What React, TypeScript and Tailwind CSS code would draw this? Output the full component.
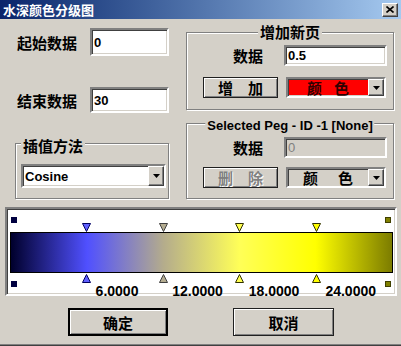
import React from "react";

const sunken =
  "border-2 border-t-[#808080] border-l-[#808080] border-b-white border-r-white shadow-[inset_1px_1px_0_#404040,inset_-1px_-1px_0_#d4d0c8]";
const raised =
  "border border-t-white border-l-white border-b-[#404040] border-r-[#404040] shadow-[inset_-1px_-1px_0_#808080]";
const btn =
  "border border-[#202020] shadow-[inset_1px_1px_0_#ffffff,inset_-1px_-1px_0_#808080]";
const etched = "border border-[#808080] shadow-[inset_1px_1px_0_#ffffff,1px_1px_0_#ffffff]";
const cjk = "font-['Noto_Sans_CJK_SC',sans-serif]";
const latin = "font-['Liberation_Sans','Noto_Sans_CJK_SC',sans-serif]";

function Arrow() {
  return (
    <div className={`w-[16px] h-full bg-[#d4d0c8] flex items-center justify-center ${raised}`}>
      <svg width="7" height="4" viewBox="0 0 7 4">
        <polygon points="0,0 7,0 3.5,4" fill="#000" />
      </svg>
    </div>
  );
}

function Marker({ x, up, fill, stroke }: { x: number; up: boolean; fill: string; stroke: string }) {
  const left = x - 4.5 - 7;
  return (
    <svg
      className="absolute"
      style={{ left, top: up ? 65 : 14 }}
      width="9"
      height="9"
      viewBox="0 0 9 9"
    >
      {up ? (
        <polygon points="4.5,0.5 8.5,8.5 0.5,8.5" fill={fill} stroke={stroke} strokeWidth="1" />
      ) : (
        <polygon points="0.5,0.5 8.5,0.5 4.5,8.5" fill={fill} stroke={stroke} strokeWidth="1" />
      )}
    </svg>
  );
}

export default function App() {
  const pegs = [
    { v: 6, fill: "#6060ff", stroke: "#000060" },
    { v: 12, fill: "#b4ac90", stroke: "#404040" },
    { v: 18, fill: "#ffff50", stroke: "#303000" },
    { v: 24, fill: "#ffff00", stroke: "#303000" },
  ];
  const px = (v: number) => 10 + (383 * v) / 30;

  return (
    <div className="w-[401px] h-[346px] bg-[#d4d0c8] flex flex-col overflow-hidden border-b border-[#404040] shadow-[inset_0_-1px_0_#808080]">
      {/* title bar */}
      <div className="h-[19px] bg-linear-to-r from-[#0a246a] to-[#a6caf0] flex items-center justify-between pl-[3px] pr-[3px] shrink-0">
        <span className={`${cjk} text-white font-bold text-[13px] leading-none`}>水深颜色分级图</span>
        <div className={`w-[16px] h-[14px] bg-[#d4d0c8] flex items-center justify-center ${raised}`}>
          <svg width="8" height="7" viewBox="0 0 8 7">
            <path d="M0.5 0.5 L7.5 6.5 M7.5 0.5 L0.5 6.5" stroke="#000" strokeWidth="1.6" />
          </svg>
        </div>
      </div>

      {/* top section */}
      <div className="flex">
        {/* left column */}
        <div className="w-[186px] flex flex-col">
          <div className="flex items-center mt-[9px] pl-[17px]">
            <span className={`${cjk} w-[73px] font-bold text-[15px] leading-none text-black`}>起始数据</span>
            <div className={`w-[79px] h-[28px] bg-white flex items-center pl-[2px] ${sunken}`}>
              <span className={`${latin} font-bold text-[13px] leading-none`}>0</span>
            </div>
          </div>
          <div className="flex items-center mt-[31px] pl-[17px]">
            <span className={`${cjk} w-[73px] font-bold text-[15px] leading-none text-black`}>结束数据</span>
            <div className={`w-[79px] h-[26px] bg-white flex items-center pl-[2px] ${sunken}`}>
              <span className={`${latin} font-bold text-[13px] leading-none`}>30</span>
            </div>
          </div>
          <div className={`relative ml-[15px] mt-[30px] w-[154px] h-[56px] pl-[5px] pt-[20px] ${etched}`}>
            <span className={`absolute left-[5px] top-[-6px] px-[2px] bg-[#d4d0c8] ${cjk} font-bold text-[15px] leading-none`}>
              插值方法
            </span>
            <div className={`w-[145px] h-[24px] bg-white flex ${sunken}`}>
              <div className="flex-1 flex items-center pl-[2px]">
                <span className={`${latin} font-bold text-[13px] leading-none`}>Cosine</span>
              </div>
              <Arrow />
            </div>
          </div>
        </div>

        {/* right column */}
        <div className="w-[208px] flex flex-col">
          <div className={`relative mt-[13px] h-[78px] pt-[12px] ${etched}`}>
            <span className={`absolute left-1/2 -translate-x-1/2 top-[-9px] px-[2px] bg-[#d4d0c8] ${cjk} font-bold text-[15px] leading-none whitespace-nowrap`}>
              增加新页
            </span>
            <div className="flex items-center">
              <span className={`${cjk} ml-[46px] w-[51px] font-bold text-[15px] leading-none`}>数据</span>
              <div className={`w-[103px] h-[21px] bg-white flex items-center pl-[2px] ${sunken}`}>
                <span className={`${latin} font-bold text-[13px] leading-none`}>0.5</span>
              </div>
            </div>
            <div className="flex mt-[11px]">
              <div className={`ml-[16px] w-[75px] h-[21px] bg-[#d4d0c8] flex items-center justify-center gap-[15px] ${btn}`}>
                <span className={`${cjk} font-bold text-[15px] leading-none`}>增</span>
                <span className={`${cjk} font-bold text-[15px] leading-none`}>加</span>
              </div>
              <div className={`ml-[8px] w-[100px] h-[21px] bg-[#ff0000] flex ${sunken}`}>
                <div className="flex-1 flex items-center justify-center gap-[12px]">
                  <span className={`${cjk} font-bold text-[15px] leading-none text-[#300000]`}>颜</span>
                  <span className={`${cjk} font-bold text-[15px] leading-none text-[#300000]`}>色</span>
                </div>
                <Arrow />
              </div>
            </div>
          </div>

          <div className={`relative mt-[13px] h-[76px] pt-[13px] ${etched}`}>
            <span className={`absolute left-1/2 -translate-x-1/2 top-[-5px] px-[2px] bg-[#d4d0c8] ${latin} font-bold text-[13px] leading-none whitespace-nowrap`}>
              Selected Peg - ID -1 [None]
            </span>
            <div className="flex items-center">
              <span className={`${cjk} ml-[46px] w-[51px] font-bold text-[15px] leading-none`}>数据</span>
              <div className={`w-[103px] h-[21px] bg-[#d4d0c8] flex items-center pl-[2px] ${sunken}`}>
                <span className={`${latin} text-[13px] leading-none text-[#808080]`}>0</span>
              </div>
            </div>
            <div className="flex mt-[9px]">
              <div className={`ml-[16px] w-[75px] h-[21px] bg-[#d4d0c8] flex items-center justify-center gap-[15px] ${btn}`}>
                <span className={`${cjk} font-bold text-[15px] leading-none text-[#808080] [text-shadow:1px_1px_0_#fff]`}>删</span>
                <span className={`${cjk} font-bold text-[15px] leading-none text-[#808080] [text-shadow:1px_1px_0_#fff]`}>除</span>
              </div>
              <div className={`ml-[8px] w-[100px] h-[21px] bg-[#d4d0c8] flex ${sunken}`}>
                <div className="flex-1 flex items-center justify-center gap-[20px]">
                  <span className={`${cjk} font-bold text-[15px] leading-none`}>颜</span>
                  <span className={`${cjk} font-bold text-[15px] leading-none`}>色</span>
                </div>
                <Arrow />
              </div>
            </div>
          </div>
        </div>
      </div>

      {/* gradient panel */}
      <div className={`relative ml-[5px] mt-[8px] w-[392px] h-[89px] bg-white ${sunken}`}>
        <div className="ml-[3px] mt-[23px] w-[383px] h-[41px] border border-black bg-[linear-gradient(to_right,#00002c_0%,#5050ff_20%,#b4ac8c_40%,#ffff58_60%,#ffff00_80%,#7c7c00_100%)]" />
        <div className="absolute left-[4px] top-[8px] w-[6px] h-[6px] bg-[#000040]" />
        <div className="absolute left-[4px] top-[72px] w-[6px] h-[6px] bg-[#000040]" />
        <div className="absolute left-[378px] top-[8px] w-[6px] h-[6px] bg-[#808000] border border-[#404000]" />
        <div className="absolute left-[378px] top-[72px] w-[6px] h-[6px] bg-[#808000] border border-[#404000]" />
        {pegs.map((p) => (
          <React.Fragment key={p.v}>
            <Marker x={px(p.v)} up={false} fill={p.fill} stroke={p.stroke} />
            <Marker x={px(p.v)} up={true} fill={p.fill} stroke={p.stroke} />
            <span
              className={`absolute ${latin} font-bold text-[14px] leading-none text-black`}
              style={{ left: px(p.v) + 9 - 7, top: 75 }}
            >
              {p.v.toFixed(4)}
            </span>
          </React.Fragment>
        ))}
      </div>

      {/* buttons */}
      <div className="flex mt-[12px]">
        <div className="ml-[68px] w-[100px] h-[28px] border-2 border-black shadow-[inset_1px_1px_0_#ffffff,inset_-1px_-1px_0_#808080] flex items-center justify-center">
          <span className={`${cjk} font-bold text-[15px] leading-none`}>确定</span>
        </div>
        <div className={`ml-[65px] w-[101px] h-[28px] flex items-center justify-center ${btn}`}>
          <span className={`${cjk} font-bold text-[15px] leading-none`}>取消</span>
        </div>
      </div>
    </div>
  );
}
